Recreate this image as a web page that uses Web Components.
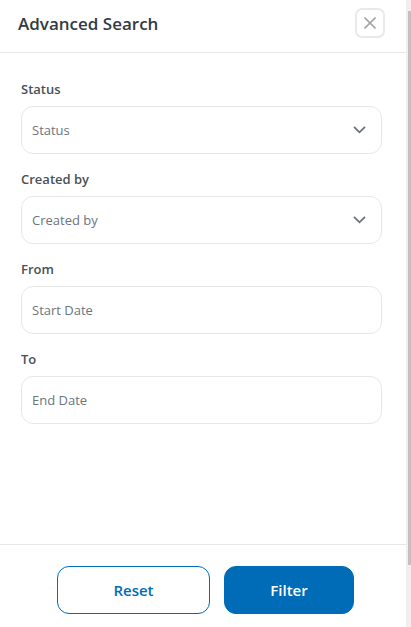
<!DOCTYPE html>
<html lang="en">
<head>
<meta charset="utf-8">
<meta name="viewport" content="width=device-width, initial-scale=1">
<title>Advanced Search</title>
<style>
  body { margin: 0; background: #fff; font-family: "Open Sans", "Noto Sans", sans-serif; }
</style>
</head>
<body>
<search-panel>
  <panel-header slot="header">Advanced Search</panel-header>
  <select-field label="Status"></select-field>
  <select-field label="Created by"></select-field>
  <date-field label="From" placeholder="Start Date"></date-field>
  <date-field label="To" placeholder="End Date"></date-field>
  <action-button slot="footer" variant="outline">Reset</action-button>
  <action-button slot="footer" variant="solid">Filter</action-button>
</search-panel>

<script>
  class BaseElement extends HTMLElement {
    constructor() {
      super();
      this.attachShadow({ mode: 'open' });
    }
    connectedCallback() {
      const t = document.createElement('template');
      t.innerHTML = this.render();
      this.shadowRoot.replaceChildren(t.content.cloneNode(true));
    }
  }

  const fieldStyles = `
    :host { display: flex; flex-direction: column; gap: 7px; }
    label { font-size: 13px; line-height: 20px; font-weight: 600; color: #495057; }
    .control {
      box-sizing: border-box; width: 100%; height: 48px; margin: 0; padding: 0 10px;
      border: 1px solid #e6e7e8; border-radius: 12px; background: #fff; outline: none;
      font: 400 13px/20px "Open Sans", "Noto Sans", sans-serif; color: #6c757d;
      appearance: none;
    }
    .control::placeholder { color: #6c757d; opacity: 1; }`;

  customElements.define('search-panel', class extends BaseElement {
    render() {
      return `
        <style>
          :host { display: grid; grid-template-columns: minmax(0, 1fr) auto; min-height: 100vh; }
          section { display: flex; flex-direction: column; }
          main { flex: 1; display: flex; flex-direction: column; gap: 15px; padding: 26px 24px 24px 21px; }
          footer {
            display: flex; justify-content: center; gap: 14px;
            padding: 21px 0 13px 5px; border-top: 1px solid #e6e7e8;
          }
        </style>
        <section>
          <slot name="header"></slot>
          <main><slot></slot></main>
          <footer><slot name="footer"></slot></footer>
        </section>
        <scroll-track></scroll-track>`;
    }
  });

  customElements.define('panel-header', class extends BaseElement {
    render() {
      return `
        <style>
          :host {
            display: flex; align-items: center; justify-content: space-between;
            padding: 8px 21px 14px 18px; border-bottom: 1px solid #e6e7e8;
          }
          h1 { margin: 0; padding-top: 2px; font-size: 17px; line-height: 24px; font-weight: 600; color: #343a40; }
          button {
            display: grid; place-items: center; box-sizing: border-box; width: 30px; height: 30px;
            padding: 0; border: 2px solid #e8e9ea; border-radius: 7px; background: #fff; color: #a2a5a8;
          }
          svg { display: block; width: 12px; height: 12px; }
        </style>
        <h1><slot></slot></h1>
        <button type="button" aria-label="Close">
          <svg viewBox="0 0 12 12" fill="none" stroke="currentColor" stroke-width="1.6" aria-hidden="true">
            <path d="M.5 .5 11.5 11.5M11.5 .5 .5 11.5"/>
          </svg>
        </button>`;
    }
  });

  customElements.define('select-field', class extends BaseElement {
    render() {
      const label = this.getAttribute('label');
      return `
        <style>
          ${fieldStyles}
          .wrap { display: grid; align-items: center; }
          .wrap > * { grid-area: 1 / 1; }
          svg { justify-self: end; margin-right: 15px; width: 14px; height: 8px; color: #6c737a; pointer-events: none; }
        </style>
        <label for="control">${label}</label>
        <div class="wrap">
          <select id="control" class="control"><option>${label}</option></select>
          <svg viewBox="0 0 14 8" fill="none" stroke="currentColor" stroke-width="1.8" aria-hidden="true">
            <path d="M1 .8 6.5 6.3 12 .8"/>
          </svg>
        </div>`;
    }
  });

  customElements.define('date-field', class extends BaseElement {
    render() {
      return `
        <style>${fieldStyles}</style>
        <label for="control">${this.getAttribute('label')}</label>
        <input id="control" class="control" type="text" placeholder="${this.getAttribute('placeholder')}">`;
    }
  });

  customElements.define('action-button', class extends BaseElement {
    render() {
      return `
        <style>
          :host { display: block; }
          button {
            box-sizing: border-box; width: 153px; height: 48px; padding: 0;
            border: 1px solid #006cb7; border-radius: 12px; background: #fff; color: #006cb7;
            font: 600 15px/22px "Open Sans", "Noto Sans", sans-serif;
          }
          :host([variant="solid"]) button { width: 130px; background: #006cb7; color: #fff; }
        </style>
        <button type="button"><slot></slot></button>`;
    }
  });

  customElements.define('scroll-track', class extends BaseElement {
    render() {
      return `
        <style>
          :host { display: flex; flex-direction: column; box-sizing: border-box; width: 5px; padding: 11px 0 0 2px; background: #f0f0f0; }
          div { height: 90%; background: #c1c1c1; }
        </style>
        <div></div>`;
    }
  });
</script>
</body>
</html>
